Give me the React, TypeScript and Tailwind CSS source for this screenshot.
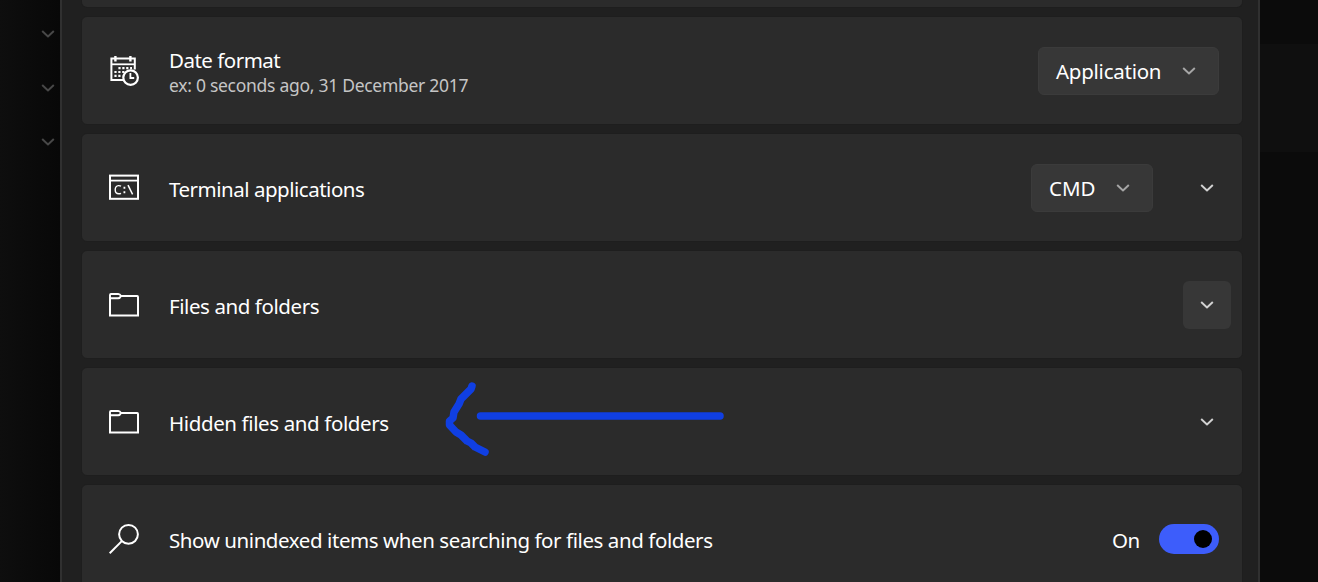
import type { ReactNode } from "react";

function Chevron({ className = "text-[#d2d2d2]" }: { className?: string }) {
  return (
    <svg width="14" height="8" viewBox="0 0 14 8" fill="none" stroke="currentColor" strokeWidth="1.9" className={`shrink-0 ${className}`}>
      <path d="M1.2 1 7 6.5 12.8 1" strokeLinejoin="round" />
    </svg>
  );
}

function CalendarIcon() {
  return (
    <svg width="32" height="32" viewBox="0 0 32 32" fill="none" stroke="white" strokeWidth="2">
      <path d="M15 25H3.4V3.5H26.8V14.5" />
      <path d="M3 9.3H27" strokeWidth="1.8" />
      <path d="M7.4 1V6.5M22.4 1V6.5" strokeWidth="2.4" />
      <path d="M10.4 13.2H24M6.4 17H18M6.4 20.8H14.6" strokeDasharray="2.2 1.7" strokeWidth="2.2" />
      <circle cx="22.6" cy="22.6" r="7.3" strokeWidth="2.2" />
      <path d="M22.4 18V23H26.2" strokeWidth="1.8" />
    </svg>
  );
}

function TerminalIcon() {
  return (
    <svg width="32" height="32" viewBox="0 0 32 32" fill="none" stroke="white">
      <rect x="2" y="3.6" width="28" height="23.2" strokeWidth="2" />
      <path d="M2 8.6H30" strokeWidth="1.8" />
      <path d="M13 14.2Q11.8 13.5 10.5 13.6C8.2 13.8 7.2 15.6 7.2 17.8C7.2 20.3 8.5 21.8 10.8 21.8Q12 21.8 13 21.3" strokeWidth="1.4" />
      <path d="M15.5 15.8H17.3M15.5 20.3H17.3" strokeWidth="1.9" />
      <path d="M20 13.2 24.6 22.4" strokeWidth="1.5" />
    </svg>
  );
}

function FolderIcon() {
  return (
    <svg width="32" height="32" viewBox="0 0 32 32" fill="none" stroke="white" strokeWidth="2">
      <path d="M2 8V26.6H30V7.9Q30 7 29.2 7H12.5" strokeWidth="2" />
      <path d="M1.8 9.2H10.2Q12 9.2 13 7Q12 5 10.2 5H3Q2 5 2 6V9" strokeWidth="1.9" />
    </svg>
  );
}

function SearchIcon() {
  return (
    <svg width="32" height="32" viewBox="0 0 32 32" fill="none" stroke="white" strokeWidth="2">
      <circle cx="20.5" cy="11.3" r="9.4" />
      <path d="M13.8 18.1 1.7 30.2" />
    </svg>
  );
}

function SettingCard({ icon, children, action }: { icon: ReactNode; children: ReactNode; action: ReactNode }) {
  return (
    <section className="flex h-[109px] w-full shrink-0 items-center rounded-[6px] border border-[#1e1e1e] bg-[#2b2b2b] pl-[26px]">
      <div className="mr-[29px] size-8 shrink-0">{icon}</div>
      <div className="min-w-0 flex-1 whitespace-nowrap pt-0.5 text-[20.5px] leading-[28px] text-white">{children}</div>
      {action}
    </section>
  );
}

export default function App() {
  return (
    <main className="flex h-[582px] w-[1318px] overflow-hidden bg-[#0b0b0b] font-['Noto_Sans','Open_Sans',sans-serif]">
      <aside className="flex w-[60px] shrink-0 flex-col items-end gap-[46px] bg-linear-to-r from-[#0e0e0e] to-[#080808] pt-[30px] pr-[5px]">
        <Chevron className="text-[#484848]" />
        <Chevron className="text-[#484848]" />
        <Chevron className="text-[#484848]" />
      </aside>
      <div className="flex w-[1200px] shrink-0 flex-col gap-2 border-x-2 border-[#303030] bg-[#202020] pr-[15px] pl-[19px]">
        <div className="h-2 shrink-0 rounded-b-[6px] border border-t-0 border-[#1e1e1e] bg-[#2b2b2b]" />
        <SettingCard
          icon={<CalendarIcon />}
          action={
            <button className="mr-[23px] flex h-12 w-[181px] items-center justify-between rounded-[6px] border border-[#3b3b3b] bg-[#373737] pr-[22px] pl-[17px] text-[20.5px] text-white">
              <span className="pt-0.5 tracking-[-0.25px]">Application</span><Chevron className="text-[#a6a6a6]" />
            </button>
          }
        >
          <div className="leading-[27px] tracking-[-0.5px]">Date format</div>
          <div className="text-[17.5px] leading-[23px] tracking-[-0.28px] text-[#c5c5c5]">ex: 0 seconds ago, 31 December 2017</div>
        </SettingCard>
        <SettingCard
          icon={<TerminalIcon />}
          action={
            <div className="mr-[28px] flex items-center gap-[47px]">
              <button className="flex h-12 w-[122px] items-center justify-between rounded-[6px] border border-[#3b3b3b] bg-[#373737] pr-[22px] pl-[17px] text-[20.5px] text-white">
                <span className="pt-0.5">CMD</span><Chevron className="text-[#a6a6a6]" />
              </button>
              <Chevron />
            </div>
          }
        ><span className="tracking-[-0.48px]">Terminal applications</span></SettingCard>
        <SettingCard
          icon={<FolderIcon />}
          action={<button className="mr-[11px] flex size-12 items-center justify-center rounded-[6px] bg-[#373737]"><Chevron /></button>}
        ><span className="tracking-[-0.42px]">Files and folders</span></SettingCard>
        <SettingCard icon={<FolderIcon />} action={<Chevron className="mr-[28px] text-[#d2d2d2]" />}>
          <div className="relative">
            <span className="tracking-[-0.38px]">Hidden files and folders</span>
            <svg className="pointer-events-none absolute top-[-39px] left-[261px]" width="310" height="100" fill="none" stroke="#103fe2" strokeLinecap="round" strokeLinejoin="round">
              <path d="M50.5 46H290" strokeWidth="7.5" />
              <path d="M42 16 41 19 31 29 29 34 24 42 23 48 19.5 51V55L26 62 31 65 37 71 41 73 45 77 55 82" strokeWidth="7.5" />
            </svg>
          </div>
        </SettingCard>
        <SettingCard
          icon={<SearchIcon />}
          action={
            <div className="mr-[23px] flex items-center gap-[19px] text-[20.5px] text-white">
              <span className="pt-[3px] tracking-[-0.3px]">On</span>
              <button className="flex h-[30px] w-[60px] items-center justify-end rounded-full bg-[#3d5dfb] pr-[7px]" aria-label="Show unindexed items">
                <span className="size-[18px] rounded-full bg-black" />
              </button>
            </div>
          }
        ><span className="tracking-[-0.42px]">Show unindexed items when searching for files and folders</span></SettingCard>
      </div>
      <div className="flex-1 pt-11"><div className="h-[108px] bg-[#0f0f0f]" /></div>
    </main>
  );
}
